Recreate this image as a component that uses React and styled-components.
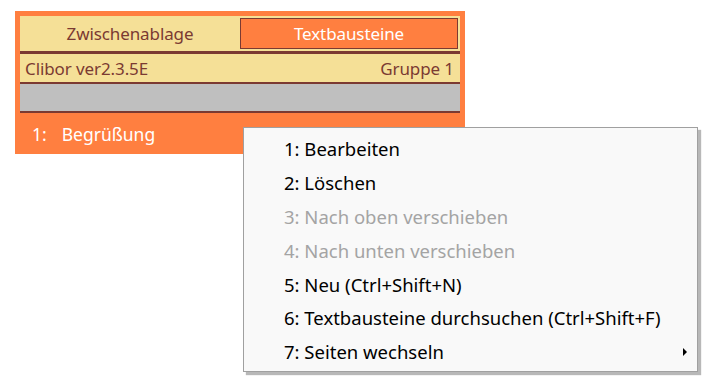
import React from 'react';
import styled, { createGlobalStyle } from 'styled-components';

const Global = createGlobalStyle`
  html, body {
    margin: 0;
    padding: 0;
    background: #ffffff;
    font-family: "Noto Sans", "Open Sans", sans-serif;
  }
`;

const Page = styled.div`
  position: relative;
  width: 715px;
  height: 386px;
  padding: 11px 0 0 15px;
  box-sizing: border-box;
`;

const Panel = styled.div`
  width: 450px;
  height: 143px;
  background: #ff7f40;
  padding: 5px 5px 0 5px;
  box-sizing: border-box;
  display: flex;
  flex-direction: column;
`;

const Tabs = styled.div`
  display: grid;
  grid-template-columns: 220px 1fr;
  background: #f5e097;
  border-bottom: 3px solid #7b3a32;
  padding: 2px 2px 2px 0;
  height: 31px;
`;

const Tab = styled.div`
  display: flex;
  align-items: center;
  justify-content: center;
  font-size: 17px;
  letter-spacing: -0.1px;
  color: ${p => (p.active ? '#ffffff' : '#7b3a32')};
  background: ${p => (p.active ? '#ff7f40' : 'transparent')};
  border: 1px solid ${p => (p.active ? '#7b3a32' : 'transparent')};
`;

const Info = styled.div`
  display: flex;
  justify-content: space-between;
  align-items: center;
  height: 28px;
  padding: 0 6px 0 5px;
  background: #f5e097;
  border-bottom: 2px solid #7b3a32;
  color: #7b3a32;
  font-size: 17px;
  letter-spacing: -0.1px;
`;

const Blank = styled.div`
  height: 27px;
  background: #bfbfbf;
  border-bottom: 2px solid #7b3a32;
`;

const Entry = styled.div`
  display: flex;
  align-items: center;
  height: 41px;
  padding-left: 12px;
  color: #ffffff;
  font-size: 17.5px;
  gap: 15px;
`;

const Menu = styled.div`
  position: absolute;
  left: 243px;
  top: 127px;
  width: 455px;
  height: 245px;
  box-sizing: border-box;
  background: #f9f9f9;
  border: 1px solid #a0a0a0;
  box-shadow: 3px 3px 1px rgba(0, 0, 0, 0.28);
  padding: 4px 2px 2px;
  display: flex;
  flex-direction: column;
`;

const Item = styled.div`
  position: relative;
  height: 33.8px;
  display: flex;
  align-items: center;
  padding-left: 38px;
  font-size: 18.5px;
  color: ${p => (p.disabled ? '#a4a4a4' : '#000000')};
`;

const Arrow = styled.span`
  position: absolute;
  right: 8px;
  top: 50%;
  margin-top: -4px;
  width: 0;
  height: 0;
  border-top: 4px solid transparent;
  border-bottom: 4px solid transparent;
  border-left: 4px solid #000000;
`;

const items = [
  { label: '1: Bearbeiten' },
  { label: '2: Löschen' },
  { label: '3: Nach oben verschieben', disabled: true },
  { label: '4: Nach unten verschieben', disabled: true },
  { label: '5: Neu (Ctrl+Shift+N)' },
  { label: '6: Textbausteine durchsuchen (Ctrl+Shift+F)' },
  { label: '7: Seiten wechseln', sub: true },
];

export default function App() {
  return (
    <Page>
      <Global />
      <Panel>
        <Tabs>
          <Tab>Zwischenablage</Tab>
          <Tab active>Textbausteine</Tab>
        </Tabs>
        <Info>
          <span>Clibor ver2.3.5E</span>
          <span>Gruppe 1</span>
        </Info>
        <Blank />
        <Entry>
          <span>1:</span>
          <span>Begrüßung</span>
        </Entry>
      </Panel>
      <Menu>
        {items.map(it => (
          <Item key={it.label} disabled={it.disabled}>
            {it.label}
            {it.sub && <Arrow />}
          </Item>
        ))}
      </Menu>
    </Page>
  );
}
